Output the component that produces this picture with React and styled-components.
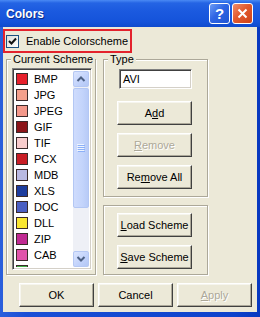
import React from 'react';
import styled, { createGlobalStyle } from 'styled-components';

const GlobalStyle = createGlobalStyle`
  html, body {
    margin: 0;
    padding: 0;
    background: #fff;
  }
  body {
    font-family: "Liberation Sans", Arial, sans-serif;
    font-size: 11px;
    color: #000;
  }
  * {
    box-sizing: border-box;
  }
`;

const Window = styled.div`
  width: 260px;
  height: 317px;
  display: flex;
  flex-direction: column;
  background: linear-gradient(90deg, #2a5fdc, #1a4fd6 10%, #0d42cc 90%, #0838bf);
  overflow: hidden;
`;

const TitleBar = styled.div`
  height: 27px;
  flex: none;
  display: flex;
  align-items: center;
  padding: 0 7px 0 6px;
  background: linear-gradient(180deg, #4a8af4 0, #2464e4 3px, #1b5adf 40%, #1553da 80%, #0f4acd 100%);
`;

const Title = styled.div`
  flex: 1;
  color: #fff;
  font-weight: bold;
  font-size: 12px;
  text-shadow: 1px 1px 0 #0b2a8a;
  padding-top: 1px;
`;

const CaptionButtons = styled.div`
  display: flex;
  gap: 2px;
`;

const CaptionButton = styled.div`
  width: 21px;
  height: 21px;
  border: 1px solid #fff;
  border-radius: 3px;
  display: flex;
  align-items: center;
  justify-content: center;
  color: #fff;
  font-weight: bold;
  font-size: 15px;
  background: ${p => p.$close
    ? 'linear-gradient(135deg, #f08d6c, #e25a2e 45%, #cf4217)'
    : 'linear-gradient(135deg, #6c9cf6, #2e65e4 45%, #1f54d2)'};
`;

const Body = styled.div`
  flex: 1;
  min-height: 0;
  margin: 0 3px 5px;
  background: #ece9d8;
  display: flex;
  flex-direction: column;
  padding-top: 2px;
`;

const Highlight = styled.div`
  width: 129px;
  height: 24px;
  flex: none;
  border: 2px solid #e3222c;
  display: flex;
  align-items: center;
  gap: 7px;
  padding-left: 1px;
`;

const CheckBox = styled.div`
  width: 13px;
  height: 13px;
  border: 1px solid #1c5180;
  background: linear-gradient(135deg, #dcdcd6, #fff);
  display: flex;
  align-items: center;
  justify-content: center;
`;

const Label = styled.span`
  font-size: 11px;
  line-height: 13px;
  white-space: nowrap;
`;

const MainRow = styled.div`
  display: flex;
  flex: none;
  gap: 7px;
  padding-left: 3px;
`;

const GroupBox = styled.fieldset`
  margin: 0;
  min-width: 0;
  padding: ${p => p.$pad || '0'};
  width: ${p => p.$w}px;
  height: ${p => p.$h}px;
  border: 1px solid #aca899;
  box-shadow: 1px 1px 0 #fff, inset 1px 1px 0 #fff;
  display: flex;
  flex-direction: column;
  align-items: flex-start;
`;

const Legend = styled.legend`
  margin-left: 4px;
  padding: 0 2px;
  line-height: 13px;
  font-size: 11px;
  white-space: nowrap;
  background: #ece9d8;
`;

const ListBox = styled.div`
  margin: 2px 0 0 5px;
  width: 80px;
  height: 202px;
  flex: none;
  display: flex;
  background: #fff;
  border: 1px solid;
  border-color: #808080 #fff #fff #808080;
  box-shadow: inset 1px 1px 0 #404040, inset -1px -1px 0 #d4d0c8;
  padding: 2px;
`;

const Items = styled.div`
  flex: 1;
  overflow: hidden;
`;

const Item = styled.div`
  height: 16px;
  display: flex;
  align-items: center;
  gap: 6px;
  padding-left: 1px;
  font-size: 11px;
`;

const Swatch = styled.div`
  width: 12px;
  height: 12px;
  border: 1px solid #3a2a2a;
  background: ${p => p.$c};
`;

const ScrollBar = styled.div`
  width: 16px;
  display: flex;
  flex-direction: column;
  background: #eef0f6;
`;

const ScrollButton = styled.div`
  height: 16px;
  flex: none;
  border: 1px solid #b5c8f4;
  border-radius: 2px;
  background: linear-gradient(135deg, #dbe5fe, #c1d2fb 60%, #b3c7f5);
  display: flex;
  align-items: center;
  justify-content: center;
`;

const Thumb = styled.div`
  height: 120px;
  flex: none;
  margin-top: 1px;
  border: 1px solid #b3c7f4;
  border-radius: 2px;
  background: linear-gradient(90deg, #cfdcfd, #c3d4fb 60%, #b8cbf7);
  display: flex;
  align-items: center;
  justify-content: center;
`;

const Track = styled.div`
  flex: 1;
`;

const RightColumn = styled.div`
  display: flex;
  flex-direction: column;
  gap: 8px;
`;

const TextInput = styled.div`
  margin: 3px 0 0 15px;
  width: 73px;
  height: 20px;
  background: #fff;
  border: 1px solid;
  border-color: #808080 #fff #fff #808080;
  box-shadow: inset 1px 1px 0 #404040, inset -1px -1px 0 #d4d0c8;
  padding: 0 3px;
  display: flex;
  align-items: center;
  font-size: 11px;
`;

const ButtonStack = styled.div`
  display: flex;
  flex-direction: column;
  gap: 8px;
  margin: ${p => p.$m || '0'};
`;

const Button = styled.div`
  width: 75px;
  height: 24px;
  flex: none;
  background: #ece9d8;
  border: 1px solid;
  border-color: #fff #404040 #404040 #fff;
  box-shadow: inset -1px -1px 0 #aca899, inset 1px 1px 0 #f6f5ee;
  display: flex;
  align-items: center;
  justify-content: center;
  font-size: 11px;
  white-space: nowrap;
  color: ${p => (p.$disabled ? '#aca899' : '#000')};
  text-shadow: ${p => (p.$disabled ? '1px 1px 0 #fff' : 'none')};
`;

const Key = styled.span`
  text-decoration: underline;
`;

const BottomRow = styled.div`
  display: flex;
  flex: none;
  gap: 4px;
  margin-top: 8px;
  padding-left: 16px;
`;

const items = [
  ['BMP', '#e6202c'],
  ['JPG', '#f4a08c'],
  ['JPEG', '#f3988a'],
  ['GIF', '#8c1519'],
  ['TIF', '#f8cccc'],
  ['PCX', '#c81d25'],
  ['MDB', '#b9b9e2'],
  ['XLS', '#1d3d9e'],
  ['DOC', '#4b5fc2'],
  ['DLL', '#f9e631'],
  ['ZIP', '#c02a92'],
  ['CAB', '#e053aa'],
  ['WAV', '#3fae45'],
];

const Arrow = ({ down }) => (
  <svg width="10" height="8" viewBox="0 0 10 8">
    <polyline
      points={down ? '1.5,2 5,5.5 8.5,2' : '1.5,6 5,2.5 8.5,6'}
      fill="none"
      stroke="#4d6185"
      strokeWidth="2"
    />
  </svg>
);

const Grip = () => (
  <svg width="8" height="8" viewBox="0 0 8 8">
    {[0, 2, 4, 6].map(y => (
      <g key={y}>
        <rect x="0" y={y} width="7" height="1" fill="#eef4fe" />
        <rect x="1" y={y + 1} width="7" height="1" fill="#8cb0f8" />
      </g>
    ))}
  </svg>
);

export default function App() {
  return (
    <>
      <GlobalStyle />
      <Window>
        <TitleBar>
          <Title>Colors</Title>
          <CaptionButtons>
            <CaptionButton>?</CaptionButton>
            <CaptionButton $close>
              <svg width="11" height="11" viewBox="0 0 11 11">
                <path d="M1.5 1.5 L9.5 9.5 M9.5 1.5 L1.5 9.5" stroke="#fff" strokeWidth="2" />
              </svg>
            </CaptionButton>
          </CaptionButtons>
        </TitleBar>
        <Body>
          <Highlight>
            <CheckBox>
              <svg width="9" height="9" viewBox="0 0 9 9">
                <polyline points="1,4 3.5,6.5 8,1.5" fill="none" stroke="#111" strokeWidth="2" />
              </svg>
            </CheckBox>
            <Label>Enable Colorscheme</Label>
          </Highlight>
          <MainRow>
            <GroupBox $w={90} $h={222}>
              <Legend>Current Scheme</Legend>
              <ListBox>
                <Items>
                  {items.map(([name, c]) => (
                    <Item key={name}>
                      <Swatch $c={c} />
                      {name}
                    </Item>
                  ))}
                </Items>
                <ScrollBar>
                  <ScrollButton><Arrow /></ScrollButton>
                  <Thumb><Grip /></Thumb>
                  <Track />
                  <ScrollButton><Arrow down /></ScrollButton>
                </ScrollBar>
              </ListBox>
            </GroupBox>
            <RightColumn>
              <GroupBox $w={105} $h={144}>
                <Legend>Type</Legend>
                <TextInput>AVI</TextInput>
                <ButtonStack $m="12px 0 0 13px">
                  <Button>A<Key>d</Key>d</Button>
                  <Button $disabled><Key>R</Key>emove</Button>
                  <Button>Re<Key>m</Key>ove All</Button>
                </ButtonStack>
              </GroupBox>
              <GroupBox $w={105} $h={70} $pad="7px 0 0 13px">
                <ButtonStack>
                  <Button><Key>L</Key>oad Scheme</Button>
                  <Button><Key>S</Key>ave Scheme</Button>
                </ButtonStack>
              </GroupBox>
            </RightColumn>
          </MainRow>
          <BottomRow>
            <Button>OK</Button>
            <Button>Cancel</Button>
            <Button $disabled><Key>A</Key>pply</Button>
          </BottomRow>
        </Body>
      </Window>
    </>
  );
}
